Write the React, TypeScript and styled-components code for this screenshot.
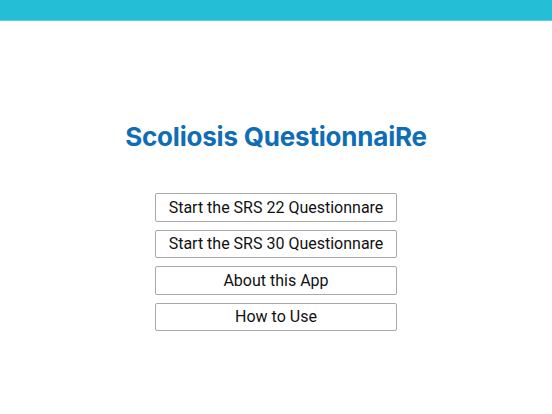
import React from 'react'
import styled, { createGlobalStyle } from 'styled-components';

const GlobalStyle = createGlobalStyle`
    html, body {
        margin: 0;
        padding: 0;
        background: #ffffff;
    }
    body {
        font-family: Inter, "Liberation Sans", sans-serif;
    }
`;

const options = [
    'Start the SRS 22 Questionnare',
    'Start the SRS 30 Questionnare',
    'About this App',
    'How to Use',
];

const App = () => {
    return (
        <Screen>
            <GlobalStyle />
            <TopBar />
            <Content>
                <Title>Scoliosis QuestionnaiRe</Title>
                <Menu>
                    {options.map(value => <MenuButton key={value}>{value}</MenuButton>)}
                </Menu>
            </Content>
        </Screen>
    );
}

const Screen = styled("div")`
    width: 552px;
    height: 414px;
    display: flex;
    flex-direction: column;
    background: #ffffff;
    overflow: hidden;
`;

const TopBar = styled("div")`
    height: 20px;
    flex-shrink: 0;
    background-color: #24bfd6;
    border-bottom: 1px solid #5fd2e3;
`;

const Content = styled("main")`
    display: flex;
    flex-direction: column;
    align-items: center;
    padding-top: 100px;
`;

const Title = styled("h1")`
    margin: 0;
    font-family: Inter, "Liberation Sans", sans-serif;
    font-size: 26px;
    font-weight: 700;
    line-height: 32px;
    color: #0f6db5;
    letter-spacing: -0.2px;
`;

const Menu = styled("nav")`
    display: flex;
    flex-direction: column;
    gap: 8px;
    margin-top: 40px;
`;

const MenuButton = styled("button")`
    width: 242px;
    height: 28.5px;
    box-sizing: border-box;
    padding: 0;
    background: #ffffff;
    border: 1px solid #a9a9a9;
    border-radius: 2px;
    font-family: Roboto, "Liberation Sans", sans-serif;
    font-size: 16px;
    font-weight: 400;
    color: #111111;
    cursor: pointer;
`;

export default App;
